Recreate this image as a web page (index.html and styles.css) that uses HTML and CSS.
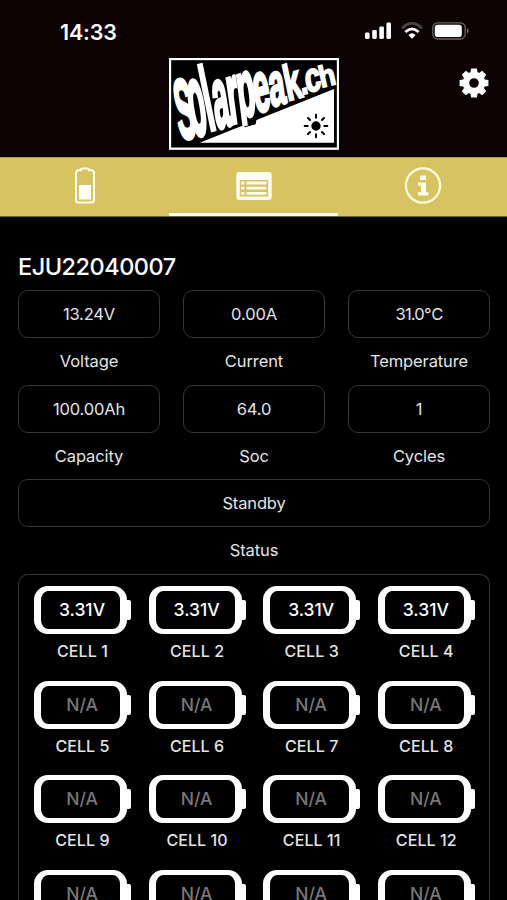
FILE: index.html
```html
<!DOCTYPE html>
<html lang="en">
<head>
  <meta charset="UTF-8">
  <meta name="viewport" content="width=device-width, initial-scale=1.0">
  <title>Solarpeak.ch</title>
  <link rel="stylesheet" href="styles.css">
</head>
<body>
  <header>
    <div class="status-bar">
      <span class="time">14:33</span>
      <div class="status-icons">
        <svg width="27" height="18" viewBox="0 0 27 18" fill="#fff">
          <rect x="0" y="10.5" width="4.6" height="6.5" rx="1.4"/>
          <rect x="7.2" y="8" width="4.6" height="9" rx="1.4"/>
          <rect x="14.3" y="4.4" width="4.6" height="12.6" rx="1.4"/>
          <rect x="21.4" y="0.6" width="4.6" height="16.4" rx="1.4"/>
        </svg>
        <svg width="22" height="18" viewBox="0 0 22 18" fill="none" stroke-width="2.7">
          <path d="M1 6.3Q11-3.4 21 6.3" stroke="#4b4546"/>
          <path d="M4.4 10.1Q11 3.8 17.6 10.1" stroke="#fff"/>
          <path d="M7.3 13Q11 9.6 14.7 13L11 16.8Z" fill="#fff"/>
        </svg>
        <svg width="37" height="18" viewBox="0 0 37 18">
          <rect x="0.8" y="0.8" width="32.4" height="16.2" rx="4.8" fill="none" stroke="#696465" stroke-width="1.3"/>
          <rect x="2.8" y="2.8" width="27" height="12.2" rx="2.8" fill="#fff"/>
          <path d="M34.8 6.2q2 .8 2 2.7t-2 2.7z" fill="#696465"/>
        </svg>
      </div>
    </div>
    <!-- every letter has its own perspective -->
    <svg class="logo" width="170" height="92" viewBox="28 25 510 276">
      <clipPath id="stem"><path d="M200 40H350V200L283 222L258 229L200 229Z"/></clipPath>
      <rect x="31" y="28" width="504" height="269" fill="#000" stroke="#fff" stroke-width="7"/>
      <path d="M120 279L523 118V279Z" fill="#fff"/>
      <path d="M247 218L256 233L288 224L291 206Z" fill="#000"/>
      <g class="logo-text">
        <text transform="matrix(.8 -.12 .42 2.5 62 269)">S</text>
        <text transform="matrix(.8 -.2 .5 3 101 261)">o</text>
        <text transform="matrix(.9 -.25 .55 2.65 149 243)">l</text>
        <text transform="matrix(.82 -.24 .4 2.55 171 238)">a</text>
        <text transform="matrix(.85 -.25 .35 2.5 213 223)">r</text>
        <g clip-path="url(#stem)"><text transform="matrix(.84 -.28 .3 2.4 242 208)">p</text></g>
        <text transform="matrix(.86 -.25 .3 2.1 289 191)">e</text>
        <text transform="matrix(.85 -.25 .25 1.8 335 172)">a</text>
        <text transform="matrix(.85 -.25 .3 1.45 384 154)">k</text>
        <text transform="matrix(.8 -.25 .2 1.1 426 136)">.</text>
        <text transform="matrix(.82 -.25 .2 1.2 442 131)">c</text>
        <text transform="matrix(.78 -.2 .2 .88 485 114)">h</text>
      </g>
      <g stroke="#000" stroke-width="6" stroke-linecap="round">
        <circle cx="469" cy="229" r="11"/>
        <path d="M469 195v9M469 254v9M435 229h9M494 229h9M445 205l6 6M487 247l6 6M445 253l6-6M487 211l6-6"/>
      </g>
    </svg>
    <svg class="gear" width="30" height="30" viewBox="-15 -15 30 30" fill="#fff">
      <circle r="8" fill="none" stroke="#fff" stroke-width="6.4"/>
      <path id="teeth" d="M-3.8-9L-2.9-14.4H2.9L3.8-9ZM-3.8 9L-2.9 14.4H2.9L3.8 9ZM-9-3.8L-14.4-2.9V2.9L-9 3.8ZM9-3.8L14.4-2.9V2.9L9 3.8Z"/>
      <use href="#teeth" transform="rotate(45)"/>
    </svg>
  </header>

  <nav>
    <div class="tab">
      <svg width="22" height="38" viewBox="0 0 22 38">
        <path d="M6.8 3.2Q6.8 1.5 8.5 1.5H13.5Q15.2 1.5 15.2 3.2H17.5Q20 3.4 20 6V33Q20 35.5 17.5 35.5H4.5Q2 35.5 2 33V6Q2 3.4 4.5 3.2Z" fill="none" stroke="#fffdea" stroke-width="2.1"/>
        <rect x="5" y="18" width="12" height="14.5" fill="#fffef5"/>
      </svg>
    </div>
    <div class="tab active">
      <svg width="36" height="30" viewBox="0 0 36 30">
        <rect x="0.3" y="1" width="35.4" height="28" rx="3" fill="#fffef0"/>
        <rect x="3.8" y="9" width="28.4" height="16.5" fill="#d7c361"/>
        <path d="M5 12h3.5M10.5 12h20M5 17.2h3.5M10.5 17.2h20M5 22.4h3.5M10.5 22.4h20" stroke="#fffef0" stroke-width="2.8"/>
      </svg>
    </div>
    <div class="tab">
      <svg width="38" height="38" viewBox="0 0 38 38">
        <circle cx="19" cy="18.5" r="17.1" fill="none" stroke="#fffadc" stroke-width="2.3"/>
        <path d="M16 8.5h6v4.5h-6zM14 15.5h8v9.7h2.5V28.5h-10.5v-3.3h3v-6.4h-3z" fill="#fffef0"/>
      </svg>
    </div>
  </nav>

  <main>
    <h1>EJU22040007</h1>
    <div class="stats">
      <div class="stat"><div class="value">13.24V</div><div class="label">Voltage</div></div>
      <div class="stat"><div class="value">0.00A</div><div class="label">Current</div></div>
      <div class="stat"><div class="value temp">31.0℃</div><div class="label">Temperature</div></div>
      <div class="stat"><div class="value">100.00Ah</div><div class="label">Capacity</div></div>
      <div class="stat"><div class="value">64.0</div><div class="label">Soc</div></div>
      <div class="stat"><div class="value">1</div><div class="label">Cycles</div></div>
      <div class="stat wide"><div class="value">Standby</div><div class="label">Status</div></div>
    </div>
    <div class="cells" id="cells"></div>
  </main>

  <script>
    const voltages = ['3.31V', '3.31V', '3.31V', '3.31V'];
    const cells = document.getElementById('cells');

    for (let i = 0; i < 16; i++) {
      const cell = document.createElement('div');
      cell.className = voltages[i] ? 'cell' : 'cell empty';
      cell.innerHTML = `<div class="battery">${voltages[i] || 'N/A'}</div>`;
      // the last row is below the fold, only its batteries are visible
      if (i < 12) cell.innerHTML += `<div class="cell-name">CELL ${i + 1}</div>`;
      cells.appendChild(cell);
    }
  </script>
</body>
</html>
```
FILE: styles.css
```css
* { box-sizing: border-box; }
body {
  margin: 0;
  height: 900px;
  overflow: hidden;
  background: #000;
  color: #e4e4e4;
  font-family: Inter, "Liberation Sans", sans-serif;
}
svg { display: block; }
header {
  position: relative;
  height: 157px;
  background: #0c0204;
}
.status-bar {
  display: flex;
  justify-content: space-between;
  height: 58px;
  padding: 22px 38px 0 60px;
}
.time {
  font-size: 21.5px;
  line-height: 20px;
  font-weight: 600;
  letter-spacing: -0.2px;
  color: #fff;
}
.status-icons { display: flex; gap: 9px; }
.logo { margin: 0 auto; }
.logo-text {
  font: bold 100px "Liberation Sans", sans-serif;
  fill: #fff;
  stroke: #fff;
  stroke-width: 5px;
}
.gear { position: absolute; top: 68px; right: 18px; }
nav {
  display: flex;
  height: 60px;
  background: #d7c361;
  border-top: 1px solid #a99a50;
  border-bottom: 1px solid #6e642f;
}
.tab {
  flex: 1;
  display: flex;
  justify-content: center;
  align-items: center;
  border-bottom: 3px solid transparent;
}
.tab.active { border-color: #fff; }
main { padding: 36px 17px 0 18px; }
h1 {
  margin: 0;
  height: 37px;
  font-size: 23.5px;
  line-height: 28px;
  font-weight: 500;
  letter-spacing: -0.5px;
  color: #fff;
}
.stats {
  display: grid;
  grid-template-columns: repeat(3, 1fr);
  column-gap: 23px;
}
.stat {
  height: 94.7px;
  text-align: center;
  font-size: 16.5px;
}
.wide { grid-column: span 3; }
.value {
  height: 48px;
  line-height: 47px;
  letter-spacing: -0.15px;
  border: 1.5px solid #363636;
  border-radius: 10px;
}
.temp { letter-spacing: -0.8px; }
.label { line-height: 47.6px; letter-spacing: -0.1px; }
.cells {
  display: grid;
  grid-template-columns: repeat(4, 114.6px);
  grid-auto-rows: 94.7px;
  align-content: start;
  height: 326px;
  padding: 11px 0 0 15px;
  border: 1px solid #363636;
  border-bottom: none;
  border-radius: 10px 10px 0 0;
  overflow: hidden;
}
.cell { width: 97px; text-align: center; }
.battery {
  position: relative;
  width: 93px;
  height: 48px;
  border: 5px solid #fff;
  border-width: 5px 7px;
  border-radius: 14px;
  line-height: 38px;
  padding-left: 3px;
  font-size: 17.5px;
  font-weight: 500;
  color: #fff;
}
.battery::after {
  content: "";
  position: absolute;
  top: 9px;
  right: -11px;
  width: 6px;
  height: 20px;
  background: #fff;
  border-radius: 0 2px 2px 0;
}
.empty .battery { color: #777; }
.cell-name {
  line-height: 35px;
  font-size: 16px;
  font-weight: 500;
  letter-spacing: 0.1px;
}
```
